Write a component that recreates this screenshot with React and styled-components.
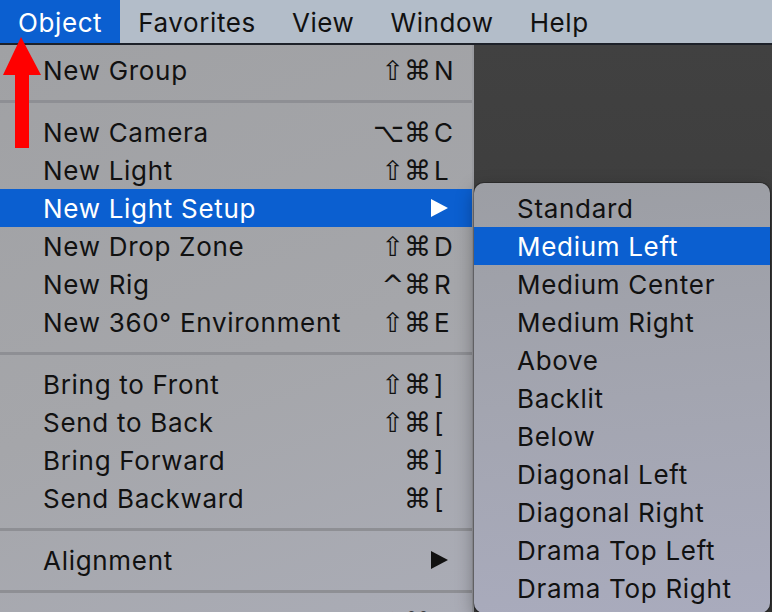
import React from "react";
import styled, { createGlobalStyle } from "styled-components";

const GlobalStyle = createGlobalStyle`
  html, body {
    margin: 0;
    padding: 0;
    background: #3c3c3c;
    overflow: hidden;
  }
  body {
    font-family: Inter, "Liberation Sans", "DejaVu Sans", sans-serif;
  }
`;

const Screen = styled.div`
  position: relative;
  width: 772px;
  height: 612px;
  overflow: hidden;
  background: #3c3c3c;
`;

const MenuBar = styled.div`
  display: flex;
  height: 43px;
  background: #b3bdc9;
  border-bottom: 2px solid #1d2129;
`;

const BarItem = styled.div`
  display: flex;
  align-items: center;
  padding: 1px 18px 0;
  font-size: 26px;
  letter-spacing: 0.6px;
  color: ${(p) => (p.active ? "#fff" : "#111")};
  background: ${(p) => (p.active ? "#0b5fd0" : "transparent")};
`;

const Stage = styled.div`
  display: flex;
  height: 567px;
`;

const Dropdown = styled.div`
  width: 472px;
  padding-top: 6px;
  background: linear-gradient(160deg, #a0a1a4 0%, #a5a6aa 55%, #aaacb6 100%);
  border-right: 2px solid #9a9ba0;
`;

const Desktop = styled.div`
  flex: 1;
  background: linear-gradient(180deg, #414141 0%, #373737 100%);
`;

const Row = styled.div`
  display: flex;
  align-items: center;
  height: 38px;
  padding: 0 16px 0 43px;
  font-size: 26px;
  letter-spacing: 0.7px;
  color: ${(p) => (p.active ? "#fff" : "#111")};
  background: ${(p) => (p.active ? "#0b5fd0" : "transparent")};
`;

const Label = styled.span`
  flex: 1;
  white-space: nowrap;
`;

const Shortcut = styled.span`
  display: flex;
  align-items: center;
  letter-spacing: 0;
  font-family: "DejaVu Sans", Inter, sans-serif;
`;

const Mods = styled.span`
  display: flex;
  justify-content: flex-end;
  gap: 3px;
  margin-right: 3px;
  font-size: 27px;
`;

const Key = styled.span`
  width: 22px;
  font-family: Inter, "Liberation Sans", sans-serif;
  font-size: 26px;
`;

const Arrow = styled.span`
  width: 0;
  height: 0;
  margin-right: 8px;
  border-top: 9px solid transparent;
  border-bottom: 9px solid transparent;
  border-left: 17px solid ${(p) => (p.active ? "#fff" : "#111")};
`;

const Separator = styled.div`
  display: flex;
  align-items: center;
  height: 24px;

  &::after {
    content: "";
    flex: 1;
    height: 3px;
    background: #8e8f94;
  }
`;

const Submenu = styled.div`
  position: absolute;
  left: 474px;
  top: 183px;
  width: 296px;
  padding: 6px 0;
  border-radius: 10px;
  background: linear-gradient(175deg, #9c9ea4 0%, #a3a5b0 50%, #a9abbd 100%);
  box-shadow: 0 0 0 1px rgba(0, 0, 0, 0.25), 0 6px 18px rgba(0, 0, 0, 0.35);
`;

const SubRow = styled(Row)`
  padding-left: 43px;
`;

const RedArrow = styled.svg`
  position: absolute;
  left: 0;
  top: 34px;
`;

const menu = [
  { label: "New Group", mods: "⇧⌘", key: "N" },
  { sep: true },
  { label: "New Camera", mods: "⌥⌘", key: "C" },
  { label: "New Light", mods: "⇧⌘", key: "L" },
  { label: "New Light Setup", sub: true, active: true },
  { label: "New Drop Zone", mods: "⇧⌘", key: "D" },
  { label: "New Rig", mods: "^⌘", key: "R" },
  { label: "New 360° Environment", mods: "⇧⌘", key: "E" },
  { sep: true },
  { label: "Bring to Front", mods: "⇧⌘", key: "]" },
  { label: "Send to Back", mods: "⇧⌘", key: "[" },
  { label: "Bring Forward", mods: "⌘", key: "]" },
  { label: "Send Backward", mods: "⌘", key: "[" },
  { sep: true },
  { label: "Alignment", sub: true },
  { sep: true },
  { label: "Group", mods: "⇧⌘", key: "G" },
];

const setups = [
  "Standard",
  "Medium Left",
  "Medium Center",
  "Medium Right",
  "Above",
  "Backlit",
  "Below",
  "Diagonal Left",
  "Diagonal Right",
  "Drama Top Left",
  "Drama Top Right",
];

const App = () => {
  return (
    <Screen>
      <GlobalStyle />
      <MenuBar>
        <BarItem active>Object</BarItem>
        <BarItem>Favorites</BarItem>
        <BarItem>View</BarItem>
        <BarItem>Window</BarItem>
        <BarItem>Help</BarItem>
      </MenuBar>
      <Stage>
        <Dropdown>
          {menu.map((item, i) =>
            item.sep ? (
              <Separator key={i} />
            ) : (
              <Row key={i} active={item.active}>
                <Label>{item.label}</Label>
                {item.sub ? (
                  <Arrow active={item.active} />
                ) : (
                  <Shortcut>
                    <Mods>{item.mods}</Mods>
                    <Key>{item.key}</Key>
                  </Shortcut>
                )}
              </Row>
            )
          )}
        </Dropdown>
        <Desktop />
      </Stage>
      <Submenu>
        {setups.map((s) => (
          <SubRow key={s} active={s === "Medium Left"}>
            <Label>{s}</Label>
          </SubRow>
        ))}
      </Submenu>
      <RedArrow width="44" height="116" viewBox="0 0 44 116">
        <polygon points="21,3 41,41 29,41 29,114 15,114 15,41 3,41" fill="#ff0000" />
      </RedArrow>
    </Screen>
  );
};

export default App;
